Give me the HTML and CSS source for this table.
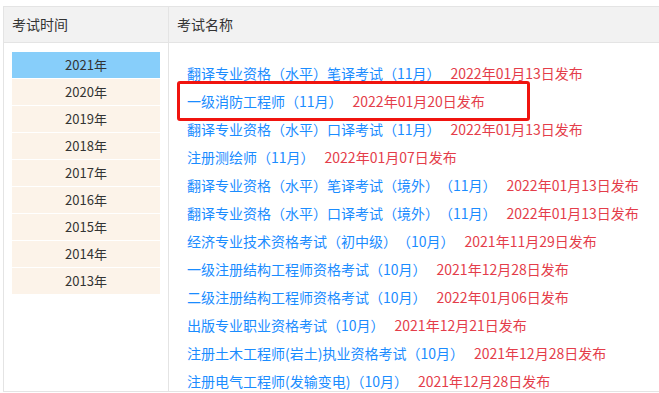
FILE: index.html
```html
<!DOCTYPE html>
<html lang="zh-CN">
<head>
<meta charset="utf-8">
<title>考试信息</title>
<link rel="stylesheet" href="styles.css">
</head>
<body>
<div class="table">
  <div class="head">
    <div class="col-time">考试时间</div>
    <div class="col-name">考试名称</div>
  </div>
  <div class="body">
    <div class="col-time">
      <ul class="years">
        <li class="active">2021年</li>
        <li>2020年</li>
        <li>2019年</li>
        <li>2018年</li>
        <li>2017年</li>
        <li>2016年</li>
        <li>2015年</li>
        <li>2014年</li>
        <li>2013年</li>
      </ul>
    </div>
    <div class="col-name">
      <ul class="exams">
        <li><a class="name">翻译专业资格（水平）笔译考试（11月）</a><span class="date">2022年01月13日发布</span></li>
        <li><a class="name">一级消防工程师（11月）</a><span class="date">2022年01月20日发布</span><span class="highlight"></span></li>
        <li><a class="name">翻译专业资格（水平）口译考试（11月）</a><span class="date">2022年01月13日发布</span></li>
        <li><a class="name">注册测绘师（11月）</a><span class="date">2022年01月07日发布</span></li>
        <li><a class="name">翻译专业资格（水平）笔译考试（境外）（11月）</a><span class="date">2022年01月13日发布</span></li>
        <li><a class="name">翻译专业资格（水平）口译考试（境外）（11月）</a><span class="date">2022年01月13日发布</span></li>
        <li><a class="name">经济专业技术资格考试（初中级）（10月）</a><span class="date">2021年11月29日发布</span></li>
        <li><a class="name">一级注册结构工程师资格考试（10月）</a><span class="date">2021年12月28日发布</span></li>
        <li><a class="name">二级注册结构工程师资格考试（10月）</a><span class="date">2022年01月06日发布</span></li>
        <li><a class="name">出版专业职业资格考试（10月）</a><span class="date">2021年12月21日发布</span></li>
        <li><a class="name">注册土木工程师(岩土)执业资格考试（10月）</a><span class="date">2021年12月28日发布</span></li>
        <li><a class="name">注册电气工程师(发输变电)（10月）</a><span class="date">2021年12月28日发布</span></li>
      </ul>
    </div>
  </div>
</div>
</body>
</html>
```

FILE: styles.css
```css
html, body {
  margin: 0;
  padding: 0;
  background: #fff;
  overflow: hidden;
}
body {
  font-family: "Microsoft YaHei", "Noto Sans CJK SC", "Noto Sans", sans-serif;
  color: #333;
  text-spacing-trim: space-all;
}
.table {
  margin: 6px 0 0 3px;
  width: 660px;
  border: 1px solid #e4e4e4;
  border-right: none;
}
.head, .body {
  display: grid;
  grid-template-columns: 164px 1fr;
}
.head {
  background: #f2f2f2;
  height: 35px;
  border-bottom: 1px solid #e4e4e4;
  font-size: 14px;
  line-height: 35px;
}
.head .col-time { padding-left: 8px; }
.head .col-name { padding-left: 8px; border-left: 1px solid #e4e4e4; }
.body { height: 348px; }
.body .col-name { border-left: 1px solid #e4e4e4; }
ul { list-style: none; margin: 0; padding: 0; }
.years {
  padding: 9px 8px 0 8px;
  display: flex;
  flex-direction: column;
  gap: 1px;
}
.years li {
  height: 26px;
  line-height: 25px;
  text-align: center;
  font-size: 13px;
  background: #fcf3e9;
  color: #333;
}
.years li.active { background: #87cefa; }
.exams {
  padding: 16px 0 0 18px;
}
.exams li {
  position: relative;
  height: 28px;
  line-height: 28px;
  font-size: 14px;
  white-space: nowrap;
}
.name { color: #1a8cff; }
.date { color: #e43d4a; margin-left: 10px; }
.highlight {
  position: absolute;
  left: -10px;
  top: -6px;
  width: 347px;
  height: 34px;
  border: 3px solid #f0140f;
  border-radius: 3px;
}
```
